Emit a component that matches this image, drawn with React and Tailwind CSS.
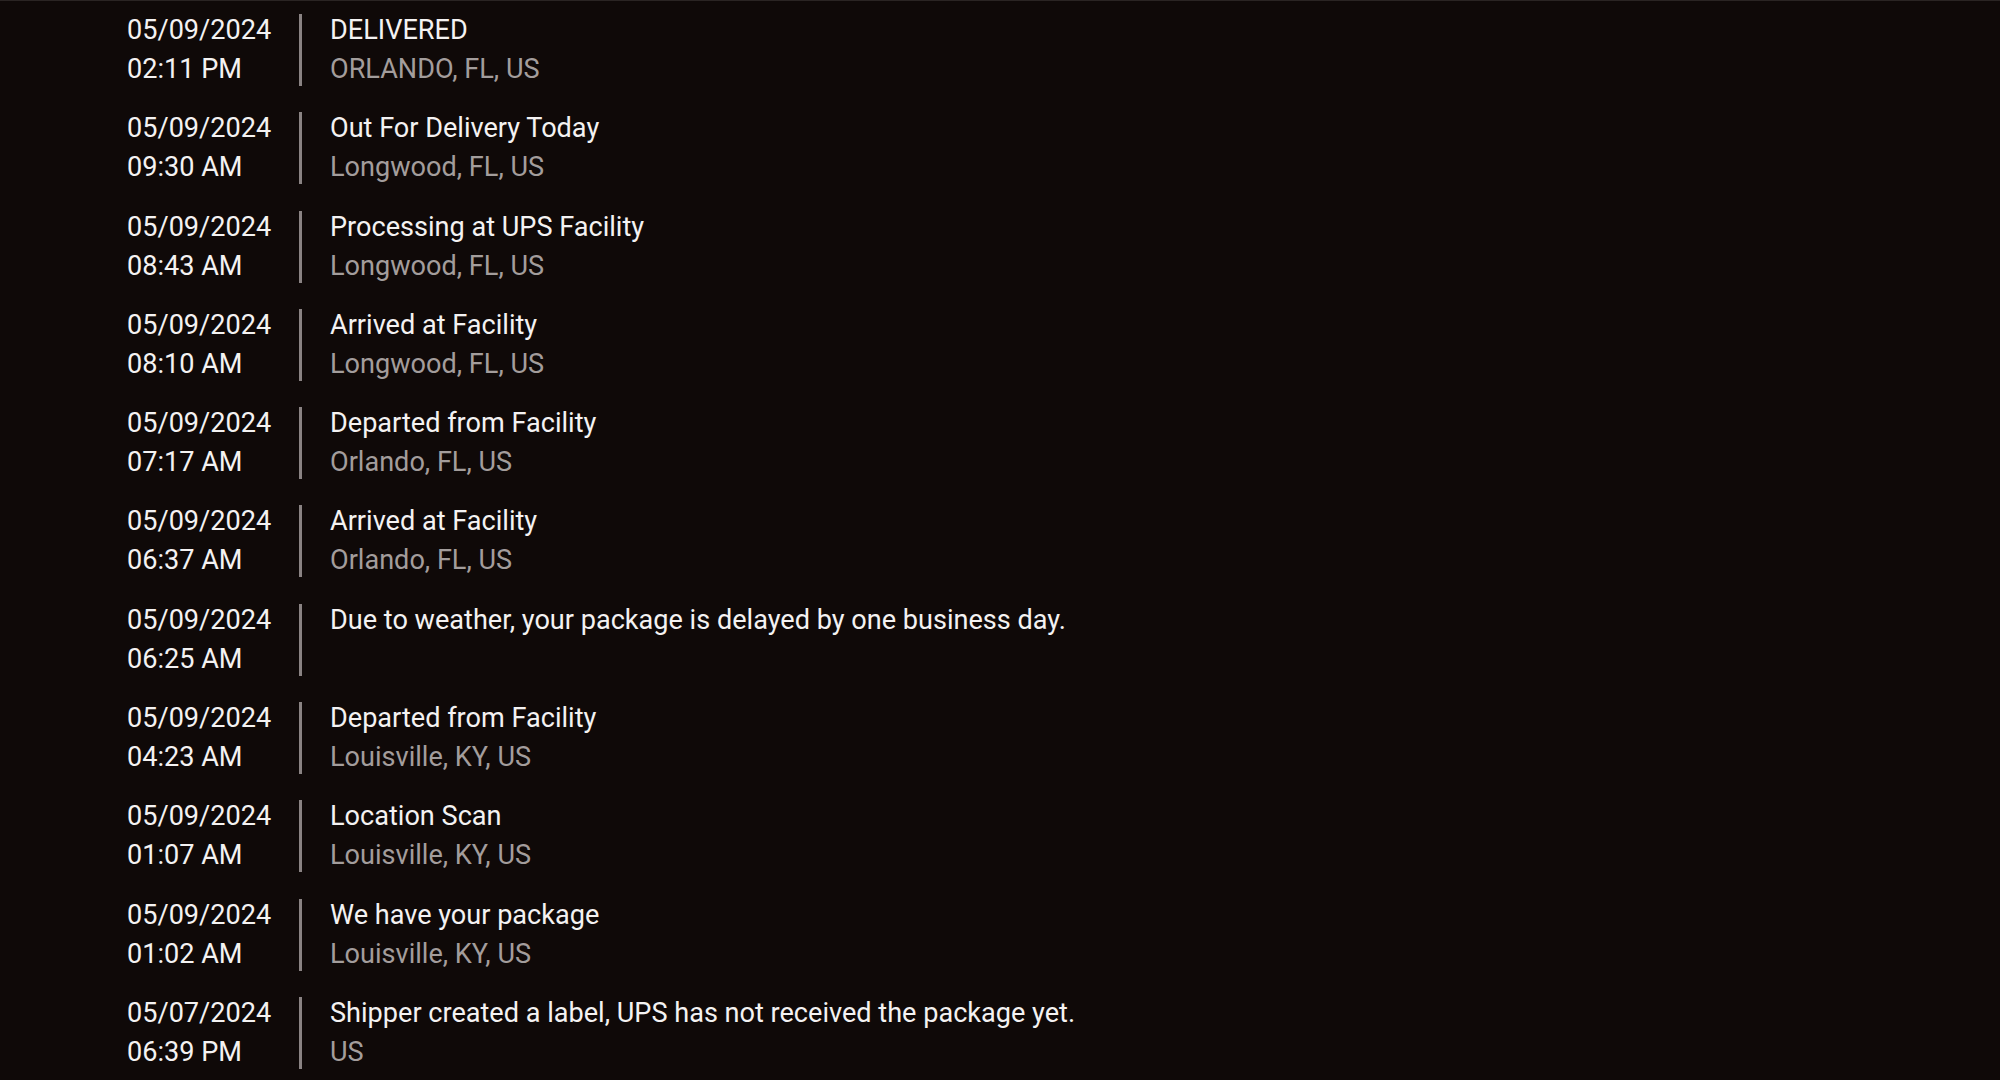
const events = [
  { date: "05/09/2024", time: "02:11 PM", status: "DELIVERED", place: "ORLANDO, FL, US" },
  { date: "05/09/2024", time: "09:30 AM", status: "Out For Delivery Today", place: "Longwood, FL, US" },
  { date: "05/09/2024", time: "08:43 AM", status: "Processing at UPS Facility", place: "Longwood, FL, US" },
  { date: "05/09/2024", time: "08:10 AM", status: "Arrived at Facility", place: "Longwood, FL, US" },
  { date: "05/09/2024", time: "07:17 AM", status: "Departed from Facility", place: "Orlando, FL, US" },
  { date: "05/09/2024", time: "06:37 AM", status: "Arrived at Facility", place: "Orlando, FL, US" },
  { date: "05/09/2024", time: "06:25 AM", status: "Due to weather, your package is delayed by one business day.", place: "" },
  { date: "05/09/2024", time: "04:23 AM", status: "Departed from Facility", place: "Louisville, KY, US" },
  { date: "05/09/2024", time: "01:07 AM", status: "Location Scan", place: "Louisville, KY, US" },
  { date: "05/09/2024", time: "01:02 AM", status: "We have your package", place: "Louisville, KY, US" },
  { date: "05/07/2024", time: "06:39 PM", status: "Shipper created a label, UPS has not received the package yet.", place: "US" },
];

// one row of the tracking history
const EventRow = ({ event }) => (
  <div className="flex">
    <div className="w-[172px] shrink-0 text-[#f4f2f2]">
      <div>{event.date}</div>
      <div>{event.time}</div>
    </div>
    <div className="w-[3px] shrink-0 my-[3px] bg-[#8a8383]" />
    <div className="pl-[28px]">
      <div className="text-[#f4f2f2]">{event.status}</div>
      <div className="text-[#a39d9c] min-h-[39px]">{event.place}</div>
    </div>
  </div>
);

export default function App() {
  return (
    <div
      className="min-h-screen bg-[#0f0908] border-t border-[#2a2423] pl-[127px] pt-[10px] text-[27.1px] leading-[39px]"
      style={{ fontFamily: "Roboto, sans-serif" }}
    >
      <div className="flex flex-col gap-[20.3px]">
        {events.map((event, index) => (
          <EventRow key={index} event={event} />
        ))}
      </div>
    </div>
  );
}
